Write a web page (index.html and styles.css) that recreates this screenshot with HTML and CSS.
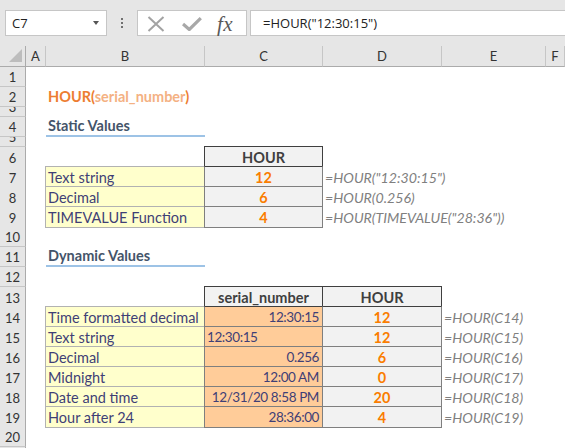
FILE: index.html
```html
<!DOCTYPE html>
<html>
<head>
<meta charset="utf-8">
<title>HOUR function</title>
<link rel="stylesheet" href="styles.css">
</head>
<body>
<div class="app">
  <div class="toolbar">
    <div class="namebox"><span>C7</span><span class="caret"></span></div>
    <div class="grip"><i></i><i></i><i></i></div>
    <div class="fbtns">
      <svg class="ic-x" width="18" height="16" viewBox="0 0 18 16"><path d="M1.5 1 L16.5 15 M16.5 1 L1.5 15" fill="none" stroke="#a3a3a3" stroke-width="2"/></svg>
      <svg class="ic-check" width="20" height="14" viewBox="0 0 20 14"><path d="M1 7 L7.3 12.5 L18.8 1.2" fill="none" stroke="#a8a8a8" stroke-width="3.2"/></svg>
      <span class="fx">fx</span>
    </div>
    <div class="formula">=HOUR("12:30:15")</div>
  </div>

  <div class="sheet">
    <div class="row colhdr">
      <div class="corner"><svg width="13" height="13" viewBox="0 0 13 13"><polygon points="0,13 13,13 13,0" fill="#bdbdbd"/></svg></div>
      <div class="ch">A</div><div class="ch">B</div><div class="ch">C</div><div class="ch">D</div><div class="ch">E</div><div class="ch">F</div>
    </div>

    <div class="row"><div class="rh">1</div></div>
    <div class="row"><div class="rh">2</div><div></div><div class="c title"><span class="fn">HOUR(</span><span class="arg">serial_number</span><span class="fn">)</span></div></div>
    <div class="row short"><div class="rh">3</div></div>
    <div class="row"><div class="rh">4</div><div></div><div class="c heading">Static Values</div></div>
    <div class="row short"><div class="rh">5</div></div>
    <div class="row"><div class="rh">6</div><div></div><div></div><div class="c box out">HOUR</div></div>
    <div class="row"><div class="rh">7</div><div></div><div class="c box note">Text string</div><div class="c box calc under-hdr">12</div><div class="c expl">=HOUR("12:30:15")</div></div>
    <div class="row"><div class="rh">8</div><div></div><div class="c box note">Decimal</div><div class="c box calc">6</div><div class="c expl">=HOUR(0.256)</div></div>
    <div class="row"><div class="rh">9</div><div></div><div class="c box note">TIMEVALUE Function</div><div class="c box calc">4</div><div class="c expl">=HOUR(TIMEVALUE("28:36"))</div></div>
    <div class="row"><div class="rh">10</div></div>
    <div class="row"><div class="rh">11</div><div></div><div class="c heading">Dynamic Values</div></div>
    <div class="row"><div class="rh">12</div></div>
    <div class="row"><div class="rh">13</div><div></div><div></div><div class="c box out">serial_number</div><div class="c box out">HOUR</div></div>
    <div class="row"><div class="rh">14</div><div></div><div class="c box note">Time formatted decimal</div><div class="c box input under-hdr">12:30:15</div><div class="c box calc under-hdr">12</div><div class="c expl">=HOUR(C14)</div></div>
    <div class="row"><div class="rh">15</div><div></div><div class="c box note">Text string</div><div class="c box input text">12:30:15</div><div class="c box calc">12</div><div class="c expl">=HOUR(C15)</div></div>
    <div class="row"><div class="rh">16</div><div></div><div class="c box note">Decimal</div><div class="c box input">0.256</div><div class="c box calc">6</div><div class="c expl">=HOUR(C16)</div></div>
    <div class="row"><div class="rh">17</div><div></div><div class="c box note">Midnight</div><div class="c box input">12:00 AM</div><div class="c box calc">0</div><div class="c expl">=HOUR(C17)</div></div>
    <div class="row"><div class="rh">18</div><div></div><div class="c box note">Date and time</div><div class="c box input">12/31/20 8:58 PM</div><div class="c box calc">20</div><div class="c expl">=HOUR(C18)</div></div>
    <div class="row"><div class="rh">19</div><div></div><div class="c box note">Hour after 24</div><div class="c box input">28:36:00</div><div class="c box calc">4</div><div class="c expl">=HOUR(C19)</div></div>
    <div class="row"><div class="rh">20</div></div>
    <div class="row"><div class="rh"></div></div>
  </div>
</div>
</body>
</html>
```

FILE: styles.css
```css
* {
  box-sizing: border-box;
}

body {
  margin: 0;
  background: #ffffff;
  font-family: Lato, "Open Sans", sans-serif;
}

.app {
  width: 565px;
  height: 448px;
  overflow: hidden;
}

/* ---------- formula bar ---------- */
.toolbar {
  height: 46px;
  background: #e6e6e6;
  display: flex;
  align-items: flex-start;
  padding-top: 10px;
}

.namebox {
  margin-left: 5px;
  width: 102px;
  height: 26px;
  background: #ffffff;
  border: 1px solid #c6c6c6;
  display: flex;
  align-items: center;
  justify-content: space-between;
  padding: 0 7px 0 6px;
  font-family: "Open Sans", sans-serif;
  font-size: 13px;
  color: #222222;
}

.caret {
  width: 0;
  height: 0;
  border-left: 3.5px solid transparent;
  border-right: 3.5px solid transparent;
  border-top: 4px solid #555555;
}

.grip {
  width: 30px;
  height: 26px;
  display: flex;
  flex-direction: column;
  align-items: center;
  gap: 2px;
  padding-top: 8px;
}

.grip i {
  display: block;
  width: 2px;
  height: 2px;
  background: #707070;
}

.fbtns {
  width: 110px;
  height: 26px;
  background: #ffffff;
  border: 1px solid #c6c6c6;
  display: flex;
  align-items: center;
  padding-left: 9px;
}

.ic-x {
  display: block;
  margin-top: 1px;
}

.ic-check {
  display: block;
  margin-left: 17px;
  margin-top: 1px;
}

.fx {
  margin-left: 15px;
  font-family: "Liberation Serif", serif;
  font-style: italic;
  font-size: 21px;
  line-height: 24px;
  color: #595959;
  padding-top: 2px;
  letter-spacing: 0.5px;
}

.formula {
  flex: 1;
  margin-left: 3px;
  height: 26px;
  background: #ffffff;
  border: 1px solid #c6c6c6;
  border-right: none;
  padding-left: 12px;
  font-family: "Open Sans", sans-serif;
  font-size: 13px;
  line-height: 24px;
  color: #222222;
  white-space: nowrap;
}

/* ---------- grid ---------- */
.row {
  display: grid;
  grid-template-columns: 26px 20px 159px 118px 119px 104px 1fr;
  height: 20px;
}

.row.short {
  height: 10px;
}

.row.colhdr {
  height: 21px;
  background: #e6e6e6;
}

.corner {
  border-right: 1px solid #ababab;
  border-bottom: 1px solid #ababab;
  display: flex;
  justify-content: flex-end;
  align-items: flex-end;
  padding: 0 3px 4px 0;
}

.corner svg {
  display: block;
}

.ch {
  border-right: 1px solid #c6c6c6;
  border-bottom: 1px solid #ababab;
  text-align: center;
  font-size: 13px;
  line-height: 20px;
  color: #333333;
}

.rh {
  background: #e6e6e6;
  border-right: 1px solid #ababab;
  border-bottom: 1px solid #c6c6c6;
  display: flex;
  justify-content: center;
  align-items: flex-end;
  line-height: 18px;
  font-size: 13px;
  color: #333333;
  overflow: hidden;
}

/* ---------- cells ---------- */
.c {
  padding: 1px 2px 0;
  white-space: nowrap;
  line-height: 19px;
  font-size: 14.5px;
  color: #3f3f76;
}

.box {
  margin: -1px 0 0 -1px;
  border: 1px solid;
}

.note {
  background: #ffffcc;
  border-color: #b2b2b2;
}

.out {
  background: #f2f2f2;
  border-color: #3f3f3f;
  color: #3f3f3f;
  font-weight: bold;
  text-align: center;
}

.calc {
  background: #f2f2f2;
  border-color: #7f7f7f;
  color: #fa7d00;
  font-weight: bold;
  text-align: center;
}

.input {
  background: #ffcc99;
  border-color: #7f7f7f;
  text-align: right;
  font-size: 13.5px;
  letter-spacing: -0.4px;
  padding-right: 3px;
}

.input.text {
  text-align: left;
  padding-left: 2px;
}

.under-hdr {
  border-top-color: #3f3f3f;
}

.expl {
  color: #7f7f7f;
  font-style: italic;
  font-size: 14.2px;
}

.title {
  font-weight: bold;
  padding-top: 0;
}

.title .fn {
  color: #ed7d31;
}

.title .arg {
  color: #f4b183;
}

.heading {
  font-weight: bold;
  color: #44546a;
  line-height: 17px;
  padding-top: 0;
  border-bottom: 2px solid #9dc3e6;
}
```
